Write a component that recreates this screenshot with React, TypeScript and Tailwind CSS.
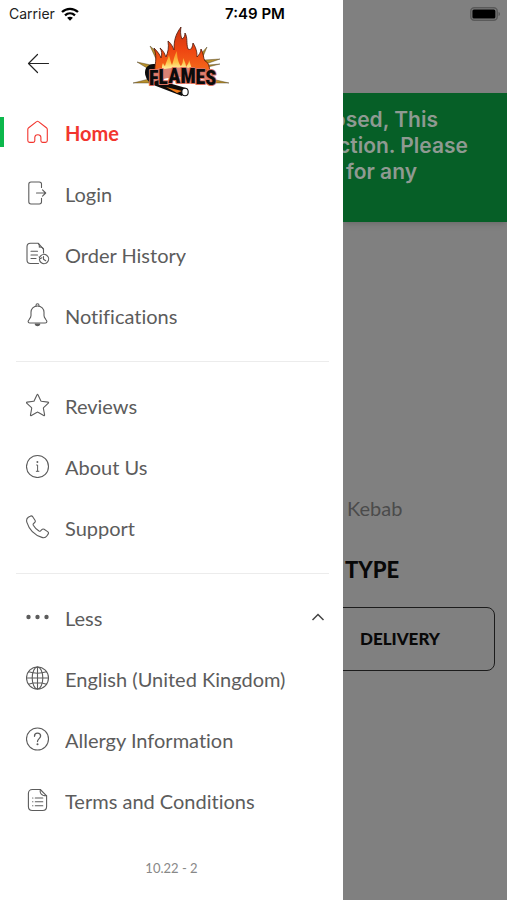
import { useState } from 'react';
import type { ReactNode } from 'react';

type Item = {
  label: string;
  icon: ReactNode;
};

const mainItems: Item[] = [
  {
    label: 'Home',
    icon: (
      <path d="M1.8 9.6c0-.8.3-1.4.9-1.9L10.600 1.600c.6-.5 1.300-.5 1.900 0l7.900 6.100c.6.500.9 1.100.9 1.900v10.900c0 1.200-.6 1.900-1.800 1.900h-3c-1 0-1.600-.6-1.600-1.600v-3.200c0-1.700-1.300-2.900-3-2.900s-3.100 1.200-3.100 2.900v3.200c0 1-.6 1.600-1.600 1.600H3.600c-1.200 0-1.800-.7-1.800-1.900z" />
    ),
  },
  {
    label: 'Login',
    icon: (
      <>
        <path d="M15.500 6.500V3.200c0-1.300-.9-2.200-2.200-2.200H5c-1.300 0-2.200.9-2.200 2.200v17.600C2.800 22.100 3.700 23 5 23h8.300c1.300 0 2.200-.9 2.200-2.200v-3.600" />
        <path d="M10.500 12h9M16.500 8.800l3.200 3.200-3.200 3.200" />
      </>
    ),
  },
  {
    label: 'Order History',
    icon: (
      <>
        <path d="M17.500 11V7.200L12.300 1.300H4.500C2.300 1.300 1 2.600 1 4.800v13.200C1 20.200 2.300 21.500 4.500 21.500h8" />
        <path d="M12.300 1.500c1 .7 1.200 1.700 1 3.600 2.400-.2 3.600.3 4.200 2.300M5 9.300h6.500M5 13h6.500M5 16.500h5" />
        <circle cx="18" cy="17" r="4.600" strokeDasharray="25 3.900" transform="rotate(215 18 17)" />
        <path d="M17.500 14.500v2.700l2.200 1.500M13.200 14.700l.8 2 1.900-.9" />
      </>
    ),
  },
  {
    label: 'Notifications',
    icon: (
      <>
        <path d="M10 3.300V2.500C10 1.500 10.600.8 11.500.8s1.500.7 1.500 1.700v.8" />
        <path d="M11.500 3C7.500 3 5 5.800 5 9.300v3.200c0 1.800-.7 2.600-1.700 3.800-.8.9-1.200 1.500-1.200 2.200 0 .9.700 1.500 1.700 1.500h15.400c1 0 1.700-.6 1.700-1.500 0-.7-.4-1.300-1.200-2.200-1-1.200-1.700-2-1.700-3.800V9.300C18 5.800 15.500 3 11.500 3z" />
        <path d="M9.200 21c.3 1 1.200 1.600 2.300 1.600s2-.6 2.300-1.600z" fill="currentColor" />
      </>
    ),
  },
];

const infoItems: Item[] = [
  {
    label: 'Reviews',
    icon: (
      <path d="M10.900 1.900c.3-.7.900-.7 1.200 0l2.700 5.900c.1.300.3.400.6.500l6.500.8c.7.100.9.600.4 1.100l-4.700 4.400c-.2.200-.3.500-.2.800l1.200 6.400c.1.700-.3 1-.9.700l-5.700-3.200c-.3-.2-.6-.2-.9 0l-5.700 3.200c-.6.300-1.100 0-.9-.7l1.200-6.400c0-.3 0-.6-.2-.8L.7 10.200c-.5-.5-.3-1 .4-1.100l6.500-.8c.3 0 .5-.2.600-.5z" />
    ),
  },
  {
    label: 'About Us',
    icon: (
      <>
        <circle cx="11.500" cy="12.500" r="11" />
        <path d="M10.600 11h1v6M10.300 17.300h2.600" strokeWidth="1" />
        <circle cx="11.400" cy="8" r=".4" fill="currentColor" />
      </>
    ),
  },
  {
    label: 'Support',
    icon: (
      <path d="M2.300 2.200 4.200 1.200c.9-.5 1.900-.3 2.500.5l2.300 3.500c.5.800.4 1.600-.3 2.300L7.500 8.700c-.5.500-.5 1-.2 1.600 1.400 2.500 3.200 4.200 5.700 5.700.6.300 1.100.3 1.600-.2l1.200-1.200c.7-.7 1.500-.8 2.300-.3l3.500 2.300c.9.600 1.100 1.600.5 2.500l-1.300 1.900c-1.100 1.600-2.900 2-4.900 1.400C8.900 20.200 3.100 14.400.900 7.400.3 5.400.7 3.300 2.300 2.200z" />
    ),
  },
];

const moreItems: Item[] = [
  {
    label: 'English (United Kingdom)',
    icon: (
      <>
        <circle cx="11.500" cy="12" r="11" />
        <ellipse cx="11.500" cy="12" rx="5.300" ry="11" />
        <path d="M11.500 1v22M.5 12h22M2.500 5.800c5.500 1.700 12.500 1.700 18 0M2.500 18.200c5.500-1.700 12.500-1.700 18 0" />
      </>
    ),
  },
  {
    label: 'Allergy Information',
    icon: (
      <>
        <circle cx="11.500" cy="12" r="11" />
        <path d="M8.500 9.300c0-1.900 1.200-3.100 3-3.100s3.100 1.200 3.100 2.900c0 2.500-3.100 2.600-3.100 5.400" strokeWidth="1.300" />
        <circle cx="11.500" cy="17.300" r=".5" fill="currentColor" />
      </>
    ),
  },
  {
    label: 'Terms and Conditions',
    icon: (
      <>
        <path d="M14.300 1.500H6.400C3.900 1.500 2.400 3 2.400 5.500v13c0 2.500 1.500 4 4 4h10.200c2.500 0 4-1.500 4-4V7.800z" />
        <path d="M14.300 1.500c-.6 2.900.2 6.300 6.300 6.300M6.600 10h.3M9.300 10h7.500M6.600 13.800h.3M9.300 13.800h7.500M6.600 17.700h.3M9.300 17.700h7.500" />
      </>
    ),
  },
];

const dots = (
  <g fill="currentColor" stroke="none">
    <circle cx="2.500" cy="12" r="2.200" />
    <circle cx="11.500" cy="12" r="2.200" />
    <circle cx="20.500" cy="12" r="2.200" />
  </g>
);

function Icon({ children }: { children: ReactNode }) {
  return (
    <svg
      viewBox="0 0 24 24"
      className="size-6 shrink-0"
      fill="none"
      stroke="currentColor"
      strokeWidth="1.1"
      strokeLinecap="round"
      strokeLinejoin="round"
      aria-hidden="true"
    >
      {children}
    </svg>
  );
}

function MenuLink({ item, active = false }: { item: Item; active?: boolean }) {
  return (
    <li className="relative">
      {active && <span className="absolute left-0 top-3.5 h-[30px] w-1 bg-[#0cb84c]" />}
      <a
        href="#"
        className={
          active
            ? 'flex h-[61px] items-start gap-[15px] pl-[26px] pt-[17px] font-bold text-[#f2352e]'
            : 'flex h-[61px] items-start gap-[15px] pl-[26px] pt-[17px] text-[#5c5c5c]'
        }
      >
        <Icon>{item.icon}</Icon>
        <span className="h-6 overflow-hidden whitespace-nowrap text-xl leading-[26px] [font-variant-ligatures:none]">
          {item.label}
        </span>
      </a>
    </li>
  );
}

function Logo() {
  return (
    <svg viewBox="0 0 100 72" className="h-[72px] w-[100px]" role="img" aria-label="Flames">
      <defs>
        <linearGradient id="fire" x1="0" y1="0" x2="0" y2="1">
          <stop offset="0" stopColor="#c93412" />
          <stop offset=".5" stopColor="#ee4411" />
          <stop offset="1" stopColor="#f4691a" />
        </linearGradient>
        <linearGradient id="core" x1="0" y1="0" x2="0" y2="1">
          <stop offset="0" stopColor="#f98a1c" />
          <stop offset=".6" stopColor="#fdc64a" />
          <stop offset="1" stopColor="#fff6b0" />
        </linearGradient>
      </defs>
      <g fill="#b8912c" stroke="#3a2c12" strokeWidth=".4">
        <path d="M20 20l9 8-3 5zM7 36l14 3 1 6zM3 57l16-4 3 4zM77 21l-8 9 3 3zM90 33l-16 1 2 4zM90 38l-12 1v2zM99 57l-17-4-1 4z" />
      </g>
      <path d="M25 38c-8-1-12 6-9 13 1 4 5 7 10 9l26 10 4-8-28-8z" fill="#0d0b0a" />
      <path d="M36 61l16 4-5 2z" fill="#f07a1a" />
      <ellipse cx="55" cy="66" rx="3.200" ry="3.800" fill="#fff" stroke="#111" strokeWidth="1.100" />
      <path
        d="M25 45c-1-6 3-12-1-23 4 4 6 7 7 10 1-4 1-7-1-10 4 3 5 7 6 9 2-5 3-9 2-16 4 3 5 7 6 9 0-9 1-15 7-23-1 6 0 9 1 12 2-1 3-3 3-6 3 5 1 10 3 16 2 1 4 1 5-6 4 6 4 11 4 14 2-2 4-5 4-8 3 5 2 9 4 12 3 1 4 4 5 10z"
        fill="url(#fire)"
        stroke="#4a1508"
        strokeWidth=".8"
        strokeLinejoin="round"
      />
      <path
        d="M32 44c0-4 0-5 1-7 1 2 1 2 2 3 1-4 3-7 4-11 1 4 2 8 3 10 2-5 2-9 5-14 0 6 1 9 2 12 1 2 1 2 2 3 2-3 2-5 2-8 2 4 3 6 3 9 2-3 3-4 3-7 2 5 2 8 4 10z"
        fill="url(#core)"
      />
      <path d="M22 46c18-6 40-6 57 0l2 10c-16-6-40-7-58 0z" fill="#d98375" />
      <text
        x="19"
        y="59"
        fill="#0b0b0b"
        stroke="#d9705f"
        strokeWidth="2"
        strokeLinejoin="round"
        paintOrder="stroke"
        fontFamily="'Roboto Condensed', Roboto, sans-serif"
        fontSize="20"
        fontWeight="900"
      >
        F<tspan dy="-1">L</tspan>
        <tspan dy="-1">AM</tspan>
        <tspan dy="1">E</tspan>
        <tspan dy="1">S</tspan>
      </text>
    </svg>
  );
}

function StatusBar() {
  return (
    <div className="absolute inset-x-0 top-0 z-10 grid h-7 grid-cols-3 items-center pl-[9px] pr-1.5 font-[Inter,sans-serif] text-sm text-[#222222]">
      <span className="flex items-center gap-1.5">
        Carrier
        <svg viewBox="0 0 18 14" className="h-3.5 w-[18px]" aria-hidden="true">
          <path d="M1 5c4.600-4.300 11.400-4.300 16 0M4 8.400c2.900-2.700 7.100-2.700 10 0" fill="none" stroke="#000" strokeWidth="2.300" />
          <path d="M9 13.800 6.100 10.800c1.600-1.500 4.200-1.500 5.800 0z" />
        </svg>
      </span>
      <span className="text-center text-[15px] font-semibold text-black">7:49 PM</span>
      <svg viewBox="0 0 31 14" className="h-3.5 w-[31px] justify-self-end" aria-hidden="true">
        <rect x=".8" y=".8" width="26.400" height="12.400" rx="3.500" fill="none" stroke="#5a5a5a" strokeWidth="1.500" />
        <rect x="2.400" y="2.400" width="23" height="9.200" rx="1.500" fill="#000" />
        <path d="M28.500 5c2 .6 2 3.400 0 4z" fill="#5a5a5a" />
      </svg>
    </div>
  );
}

function Drawer() {
  const [expanded, setExpanded] = useState(true);

  return (
    <aside className="bg-white">
      <header className="flex h-[103px] items-start pl-[27px] pt-[26px]">
        <button type="button" aria-label="Back" className="mt-[26px]">
          <svg viewBox="0 0 23 22" className="h-[22px] w-[23px]" fill="none" stroke="#222" strokeWidth="1.200" strokeLinecap="round" strokeLinejoin="round">
            <path d="M21.500 11.500H2M10.500 2.500l-9 9 9 9" />
          </svg>
        </button>
        <div className="ml-20">
          <Logo />
        </div>
      </header>

      <nav>
        <ul>
          {mainItems.map((item, index) => (
            <MenuLink key={item.label} item={item} active={index === 0} />
          ))}
        </ul>
        <hr className="my-3.5 ml-4 mr-3.5 border-[#ececec]" />
        <ul>
          {infoItems.map((item) => (
            <MenuLink key={item.label} item={item} />
          ))}
        </ul>
        <hr className="my-3.5 ml-4 mr-3.5 border-[#ececec]" />
        <button
          type="button"
          aria-expanded={expanded}
          onClick={() => setExpanded(!expanded)}
          className="flex h-[61px] w-full items-start gap-[15px] pl-[26px] pr-[18px] pt-[17px] text-left text-[#5c5c5c]"
        >
          <Icon>{dots}</Icon>
          <span className="h-6 grow overflow-hidden text-xl leading-[26px]">{expanded ? 'Less' : 'More'}</span>
          <svg viewBox="0 0 14 24" className="h-6 w-3.5" fill="none" stroke="#444" strokeWidth="1.500" aria-hidden="true">
            <path d="M1.500 15 7 9.500l5.500 5.500" />
          </svg>
        </button>
        {expanded && (
          <ul>
            {moreItems.map((item) => (
              <MenuLink key={item.label} item={item} />
            ))}
          </ul>
        )}
      </nav>

      <p className="pt-7 text-center text-[13px] leading-4 text-[#888888]">10.22 - 2</p>
    </aside>
  );
}

function OrderPage() {
  return (
    <main className="overflow-hidden bg-[#808080] pt-[93px]">
      <div className="h-[129px] whitespace-nowrap bg-[#065f27] pt-3.5 font-[Inter,sans-serif] text-[21px] font-semibold leading-[26px] text-[#8f9a92] shadow-md">
        <p className="flex justify-end pr-[69px]">osed, This</p>
        <p className="flex justify-end pr-[39px]">ction. Please</p>
        <p className="flex justify-end pr-[90px]">for any</p>
      </div>
      <p className="mt-[274px] pl-1 text-xl leading-6 text-[#4b4b4b]">Kebab</p>
      <h2 className="mt-9 pl-0.5 text-[22px] font-black leading-7 text-[#080808]">TYPE</h2>
      <button
        type="button"
        className="-ml-3 mt-[23px] block h-16 w-full rounded-lg border border-[#1c1c1c] pr-[54px] text-right text-[17px] font-black text-[#080808]"
      >
        DELIVERY
      </button>
    </main>
  );
}

export default function App() {
  return (
    <div className="relative grid min-h-screen grid-cols-[343fr_164fr] font-[Lato,sans-serif]">
      <StatusBar />
      <Drawer />
      <OrderPage />
    </div>
  );
}
